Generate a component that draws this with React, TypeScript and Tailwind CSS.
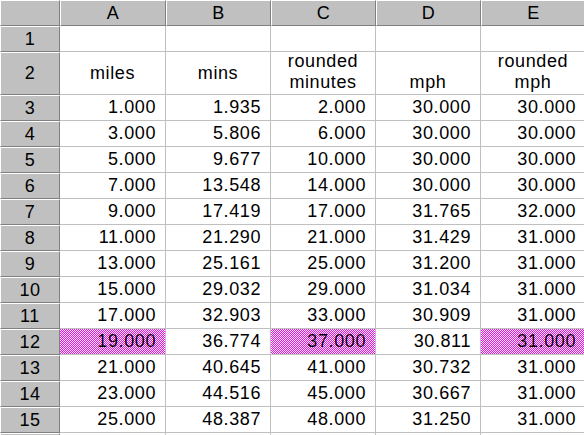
import React from "react";

type Row = [string, string, string, string, string];

const rows: Row[] = [
  ["1.000", "1.935", "2.000", "30.000", "30.000"],
  ["3.000", "5.806", "6.000", "30.000", "30.000"],
  ["5.000", "9.677", "10.000", "30.000", "30.000"],
  ["7.000", "13.548", "14.000", "30.000", "30.000"],
  ["9.000", "17.419", "17.000", "31.765", "32.000"],
  ["11.000", "21.290", "21.000", "31.429", "31.000"],
  ["13.000", "25.161", "25.000", "31.200", "31.000"],
  ["15.000", "29.032", "29.000", "31.034", "31.000"],
  ["17.000", "32.903", "33.000", "30.909", "31.000"],
  ["19.000", "36.774", "37.000", "30.811", "31.000"],
  ["21.000", "40.645", "41.000", "30.732", "31.000"],
  ["23.000", "44.516", "45.000", "30.667", "31.000"],
  ["25.000", "48.387", "48.000", "31.250", "31.000"],
];

const highlighted: Record<number, number[]> = { 12: [0, 2, 4] };

// left edge of each data column, so the dither lines up across cells
const colX = [60, 166, 271, 376, 481];
const rowY = (n: number) => 95 + (n - 3) * 26;

const headCell = "flex items-center justify-center bg-[#c0c0c0] border-t border-l border-t-white border-l-white border-r border-b border-r-[#808080] border-b-[#808080]";
const dataCell = "border-r border-b border-[#c0c0c0]";

// 1px magenta/white dither used for the selected cells
const Checker = ({ id, phase }: { id: string; phase: number }) => (
  <svg className="absolute inset-0 w-full h-full" shapeRendering="crispEdges">
    <defs>
      <pattern id={id} width="2" height="2" patternUnits="userSpaceOnUse">
        <rect width="2" height="2" fill="#ffffff" />
        <rect x={phase ? 0 : 1} y="0" width="1" height="1" fill="#ff00ff" />
        <rect x={phase ? 1 : 0} y="1" width="1" height="1" fill="#ff00ff" />
      </pattern>
    </defs>
    <rect width="100%" height="100%" fill={`url(#${id})`} />
  </svg>
);

export default function App() {
  return (
    <div className="w-[584px] h-[435px] overflow-hidden bg-white text-black text-[18px] tracking-[0.6px] font-['Liberation_Sans',Arial,sans-serif]">
      <div className="grid grid-cols-[60px_106px_105px_105px_105px_105px] grid-rows-[26px_26px_43px_repeat(14,26px)]">
        {/* column headers */}
        <div className={headCell}></div>
        {["A", "B", "C", "D", "E"].map((c) => (
          <div key={c} className={headCell}>
            {c}
          </div>
        ))}

        {/* row 1 */}
        <div className={headCell}>1</div>
        {[0, 1, 2, 3, 4].map((i) => (
          <div key={i} className={dataCell}></div>
        ))}

        {/* row 2 - labels */}
        <div className={headCell}>2</div>
        <div className={`${dataCell} flex items-center justify-center`}>miles</div>
        <div className={`${dataCell} flex items-center justify-center`}>mins</div>
        <div className={`${dataCell} flex items-end justify-center text-center leading-[21px] pb-px`}>
          rounded
          <br />
          minutes
        </div>
        <div className={`${dataCell} flex items-end justify-center leading-[21px] pb-px`}>mph</div>
        <div className={`${dataCell} flex items-end justify-center text-center leading-[21px] pb-px`}>
          rounded
          <br />
          mph
        </div>

        {/* data rows */}
        {rows.map((row, r) => {
          const n = r + 3;
          const hl = highlighted[n] || [];
          return (
            <React.Fragment key={n}>
              <div className={headCell}>{n}</div>
              {row.map((v, i) => (
                <div key={i} className={`${dataCell} relative flex items-center justify-end pr-[9px]`}>
                  {hl.includes(i) && <Checker id={`chk-${n}-${i}`} phase={(colX[i] + rowY(n)) % 2} />}
                  <span className="relative">{v}</span>
                </div>
              ))}
            </React.Fragment>
          );
        })}

        {/* partial row 16 */}
        <div className={headCell}></div>
        {[0, 1, 2, 3, 4].map((i) => (
          <div key={i} className={dataCell}></div>
        ))}
      </div>
    </div>
  );
}
